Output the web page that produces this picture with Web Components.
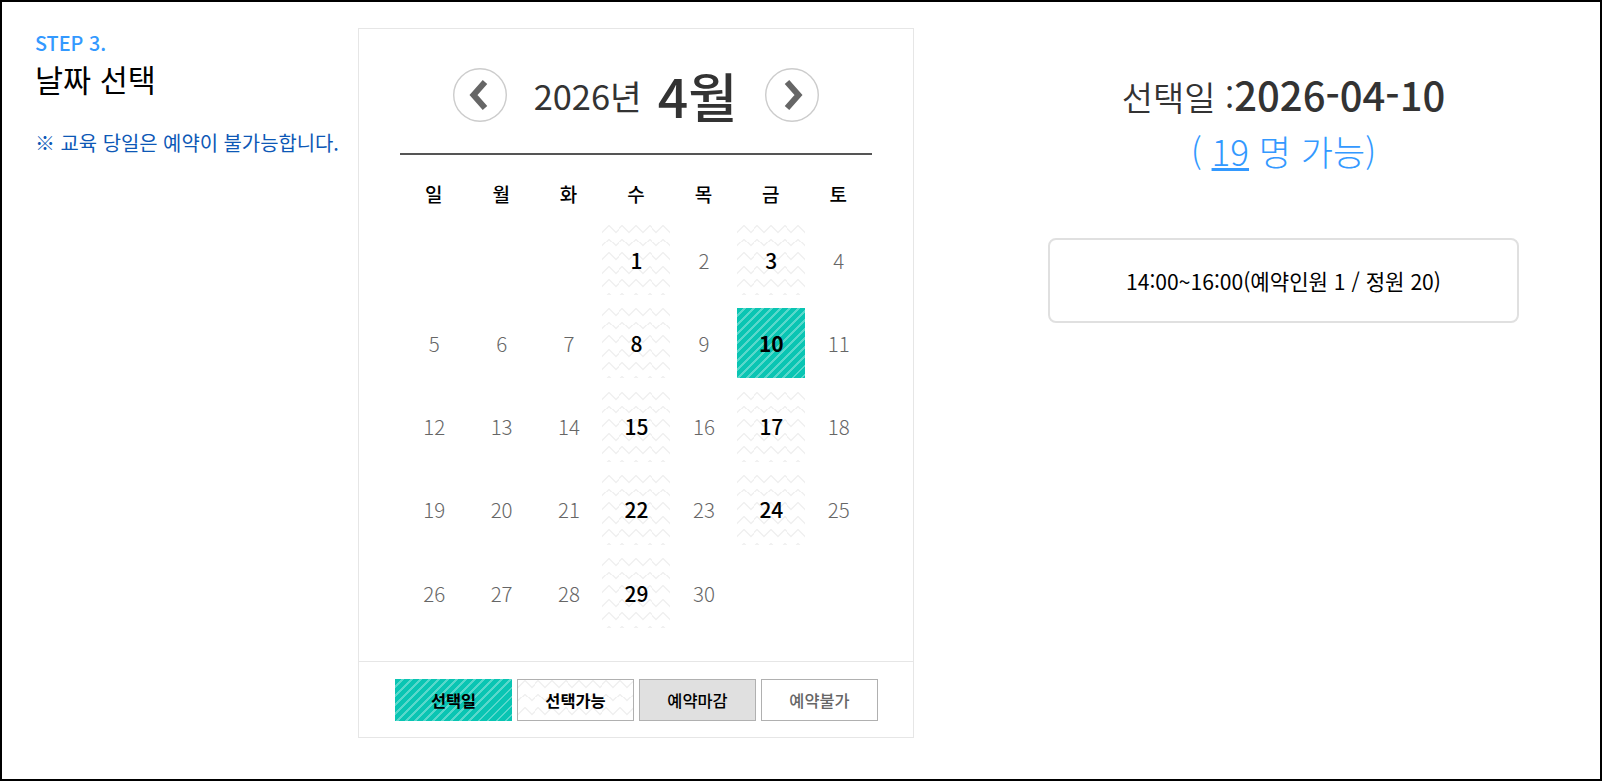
<!DOCTYPE html>
<html lang="ko"><head><meta charset="utf-8">
<style>
html,body{margin:0;padding:0;background:#fff}
body{font-family:"Noto Sans CJK KR","Noto Sans",sans-serif}
</style></head><body>
<template id="t-page"><style>
:host{display:flex;box-sizing:border-box;width:1602px;height:781px;border:2px solid #000;padding:26px 0 0 33px;background:#fff;align-items:flex-start}
</style><slot></slot></template>

<template id="t-step"><style>
:host{display:block;width:323px;flex:none}
.s{font-size:19.8px;line-height:30px;color:#3399ff;font-weight:500;white-space:nowrap}
h2{margin:1px 0 0;font-size:30.5px;line-height:40px;font-weight:400;color:#000}
p{margin:30px 0 0;font-size:19.9px;line-height:28px;color:#0d58b6;white-space:nowrap}
</style><div class="s">STEP 3.</div><h2>날짜 선택</h2><p>※ 교육 당일은 예약이 불가능합니다.</p></template>

<template id="t-cal"><style>
:host{display:block;box-sizing:border-box;width:556px;height:710px;flex:none;border:1px solid #e6e6e6}
.in{padding:0 41px;height:632px;box-sizing:border-box}
.head{display:flex;align-items:center;justify-content:center;height:116px;padding-top:8px;border-bottom:2px solid #555;color:#333}
.y{font-size:34.4px;margin:0 16px 0 27px;line-height:50px}
.m{font-size:53.5px;font-weight:500;line-height:60px}
.nav{width:54px;height:54px;flex:none}
.dows{display:grid;grid-template-columns:repeat(7,1fr);height:63px;padding-top:7px;align-items:center;text-align:center;font-size:19px;color:#000;font-weight:500}
.grid{display:grid;grid-template-columns:repeat(7,1fr);grid-auto-rows:70px;row-gap:13.3px}
</style><div class="in">
<div class="head">
<svg class="nav" viewBox="0 0 54 54"><circle cx="27" cy="27" r="26.3" fill="#fff" stroke="#ccc" stroke-width="1.4"/><path d="M32 14 L20.5 27 L32 40" fill="none" stroke="#666" stroke-width="6"/></svg>
<span class="y">2026년</span><span class="m">4월</span><span style="width:28px;flex:none"></span>
<svg class="nav" viewBox="0 0 54 54"><circle cx="27" cy="27" r="26.3" fill="#fff" stroke="#ccc" stroke-width="1.4"/><path d="M22 14 L33.5 27 L22 40" fill="none" stroke="#666" stroke-width="6"/></svg>
</div>
<div class="dows"><span>일</span><span>월</span><span>화</span><span>수</span><span>목</span><span>금</span><span>토</span></div>
<div class="grid"><slot></slot></div>
</div><slot name="foot"></slot></template>

<template id="t-day"><style>
:host{display:flex;align-items:center;justify-content:center;padding-left:1px;padding-bottom:1px;font-size:20.5px;font-weight:300;color:#666}
:host([kind=able]){color:#000;font-weight:500;font-size:21px;background-image:var(--zig)}
:host([kind=sel]){color:#000;font-weight:700;font-size:21px;background-color:#09c5b3;background-image:var(--stripe)}
</style><slot></slot></template>

<template id="t-legend"><style>
:host{display:flex;justify-content:center;gap:5px;height:75px;border-top:1px solid #e6e6e6;padding-top:17px;box-sizing:border-box}
</style><slot></slot></template>

<template id="t-chip"><style>
:host{display:flex;align-items:center;justify-content:center;box-sizing:border-box;width:117px;height:42px;padding-left:1px;border:1px solid #b0b0b0;font-size:16.4px;color:#000}
:host([kind=sel]){border:0;font-weight:700;background-color:#09c5b3;background-image:var(--stripe)}
:host([kind=able]){font-weight:700;background-image:var(--zig)}
:host([kind=closed]){background:#e0e0e0;font-weight:500}
:host([kind=no]){color:#666;font-weight:500}
</style><slot></slot></template>

<template id="t-side"><style>
:host{display:block;width:471px;flex:none;margin-left:134px;text-align:center}
.d{margin-top:38px;font-size:34px;line-height:56px;color:#333;font-weight:350;white-space:nowrap}
.d b{font-size:40px;font-weight:500}
.c{font-size:35px;line-height:52px;color:#3399ff;font-weight:300;white-space:nowrap}
.box{margin-top:61px;height:85px;box-sizing:border-box;border:2px solid #e0e0e0;border-radius:8px;display:flex;align-items:center;justify-content:center;font-size:21.1px;color:#000}
</style><div class="d">선택일 :<b>2026-04-10</b></div><div class="c">( <u>19</u> 명 가능)</div><div class="box">14:00~16:00(예약인원 1 / 정원 20)</div></template>

<script>
const zig="url(\"data:image/svg+xml,%3Csvg xmlns='http://www.w3.org/2000/svg' width='13.6' height='13.6'%3E%3Cpath d='M-1 8.3 L0 7.3 L6.8 .5 L13.6 7.3 L14.6 8.3' fill='none' stroke='%23efefef' stroke-width='1.3'/%3E%3C/svg%3E\")";
const stripe="repeating-linear-gradient(135deg,transparent 0 4.5px,rgba(255,255,255,.32) 4.5px 6.4px)";
document.documentElement.style.setProperty('--zig',zig);
document.documentElement.style.setProperty('--stripe',stripe);
for(const [n,t] of [['x-page','t-page'],['x-step','t-step'],['x-cal','t-cal'],['x-day','t-day'],['x-legend','t-legend'],['x-chip','t-chip'],['x-side','t-side']]){
 customElements.define(n,class extends HTMLElement{constructor(){super();this.attachShadow({mode:'open'}).append(document.getElementById(t).content.cloneNode(true))}});
}
</script>
<x-page>
<x-step></x-step>
<x-cal>
<x-day></x-day><x-day></x-day><x-day></x-day><x-day kind="able">1</x-day><x-day>2</x-day><x-day kind="able">3</x-day><x-day>4</x-day>
<x-day>5</x-day><x-day>6</x-day><x-day>7</x-day><x-day kind="able">8</x-day><x-day>9</x-day><x-day kind="sel">10</x-day><x-day>11</x-day>
<x-day>12</x-day><x-day>13</x-day><x-day>14</x-day><x-day kind="able">15</x-day><x-day>16</x-day><x-day kind="able">17</x-day><x-day>18</x-day>
<x-day>19</x-day><x-day>20</x-day><x-day>21</x-day><x-day kind="able">22</x-day><x-day>23</x-day><x-day kind="able">24</x-day><x-day>25</x-day>
<x-day>26</x-day><x-day>27</x-day><x-day>28</x-day><x-day kind="able">29</x-day><x-day>30</x-day><x-day></x-day><x-day></x-day>
<x-legend slot="foot"><x-chip kind="sel">선택일</x-chip><x-chip kind="able">선택가능</x-chip><x-chip kind="closed">예약마감</x-chip><x-chip kind="no">예약불가</x-chip></x-legend>
</x-cal>
<x-side></x-side>
</x-page>
</body></html>
